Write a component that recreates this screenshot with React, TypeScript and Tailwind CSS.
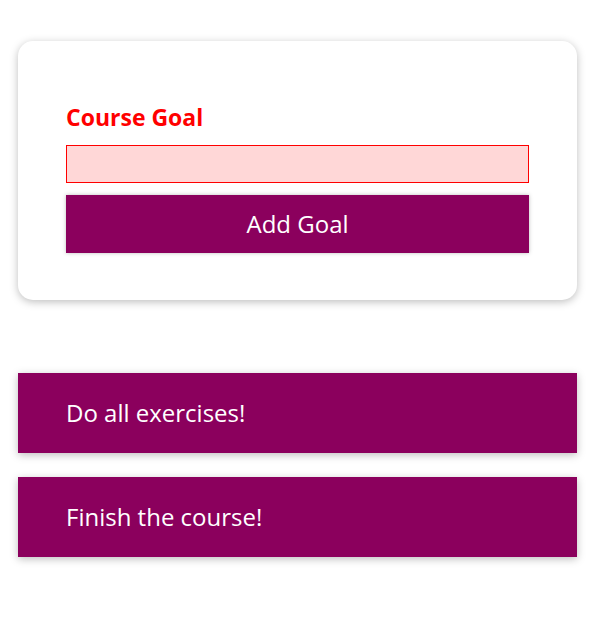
import { useState } from "react";

export default function App() {
  const [goals] = useState([
    { id: "g1", text: "Do all exercises!" },
    { id: "g2", text: "Finish the course!" },
  ]);

  return (
    <div
      className="min-h-[630px] bg-white text-[24px] leading-[32px]"
      style={{ fontFamily: '"Open Sans", "Noto Sans", sans-serif' }}
    >
      <div className="h-[41px]" />
      {/* Goal form */}
      <form
        onSubmit={(e) => e.preventDefault()}
        className="ml-[18px] w-[559px] rounded-[15px] bg-white px-[48px] pt-[48px] pb-[47px] shadow-[0_2px_8px_rgba(0,0,0,0.26)]"
      >
        <div className="my-[12px]">
          <label className="mb-[12px] block text-[23px] font-bold text-[#ff0000]">
            Course Goal
          </label>
          <input
            type="text"
            className="block h-[38px] w-full border border-[#ff0000] bg-[#ffd7d7] px-[6px] leading-[36px] outline-none"
          />
        </div>
        <button
          type="submit"
          className="block h-[58px] w-full border border-[#8b005d] bg-[#8b005d] px-[36px] py-[12px] text-white shadow-[0_0_4px_rgba(0,0,0,0.26)]"
        >
          Add Goal
        </button>
      </form>

      {/* Goals list */}
      <ul className="ml-[18px] mt-[73px] flex w-[559px] flex-col gap-[24px]">
        {goals.map((g) => (
          <li
            key={g.id}
            className="h-[80px] bg-[#8b005d] px-[48px] py-[24px] text-white shadow-[0_2px_8px_rgba(0,0,0,0.26)]"
          >
            {g.text}
          </li>
        ))}
      </ul>
    </div>
  );
}
